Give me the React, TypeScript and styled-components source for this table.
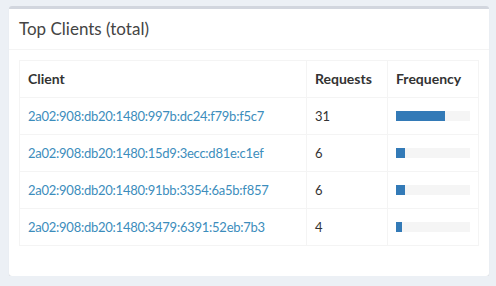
import styled, { createGlobalStyle } from "styled-components";

interface I_Client {
    Ip: string;
    Count: number;
}

const Clients: I_Client[] = [
    { Ip: "2a02:908:db20:1480:997b:dc24:f79b:f5c7", Count: 31 },
    { Ip: "2a02:908:db20:1480:15d9:3ecc:d81e:c1ef", Count: 6 },
    { Ip: "2a02:908:db20:1480:91bb:3354:6a5b:f857", Count: 6 },
    { Ip: "2a02:908:db20:1480:3479:6391:52eb:7b3", Count: 4 },
];

const Total = 47;

const GlobalStyle = createGlobalStyle`
    html, body {
        margin: 0;
        padding: 0;
        background-color: #ecf0f5;
        font-family: Lato, "Liberation Sans", sans-serif;
        color: #333;
    }
`;

const Page = styled.div`
    padding: 6px 7px 0 9px;
`;

const Box = styled.div`
    width: 480px;
    background-color: #fff;
    border-top: 3px solid #d2d6de;
    border-radius: 3px;
    box-shadow: 0 1px 1px rgba(0, 0, 0, 0.1);
`;

const BoxHeader = styled.div`
    padding: 10px;
    border-bottom: 1px solid #f4f4f4;
`;

const BoxTitle = styled.h3`
    margin: 0;
    font-size: 17px;
    line-height: 20px;
    font-weight: normal;
    color: #444;
`;

const BoxBody = styled.div`
    padding: 10px;
`;

const Table = styled.table`
    width: 100%;
    border-collapse: collapse;
    border: 1px solid #f4f4f4;
    margin-bottom: 20px;
    font-size: 14px;
    line-height: 20px;
`;

const Th = styled.th<{ $width?: number }>`
    text-align: left;
    font-weight: bold;
    padding: 8px;
    border: 1px solid #f4f4f4;
    width: ${(p) => (p.$width ? `${p.$width}px` : "auto")};
`;

const Td = styled.td`
    padding: 8px;
    border: 1px solid #f4f4f4;
    vertical-align: middle;
`;

const ClientLink = styled.a`
    color: #3c8dbc;
    text-decoration: none;
    font-size: 13px;
    letter-spacing: -0.25px;
`;

const Count = styled.span`
    font-size: 13px;
`;

const Progress = styled.div`
    height: 10px;
    width: 74px;
    background-color: #f5f5f5;
    overflow: hidden;
`;

const ProgressBar = styled.div`
    height: 100%;
    background-color: #337ab7;
`;

export default function App() {
    return (
        <>
            <GlobalStyle />
            <Page>
                <Box>
                    <BoxHeader>
                        <BoxTitle>Top Clients (total)</BoxTitle>
                    </BoxHeader>
                    <BoxBody>
                        <Table>
                            <thead>
                                <tr>
                                    <Th>Client</Th>
                                    <Th $width={64}>Requests</Th>
                                    <Th $width={74}>Frequency</Th>
                                </tr>
                            </thead>
                            <tbody>
                                {Clients.map((data) => (
                                    <tr key={data.Ip}>
                                        <Td>
                                            <ClientLink href="#">{data.Ip}</ClientLink>
                                        </Td>
                                        <Td>
                                            <Count>{data.Count}</Count>
                                        </Td>
                                        <Td>
                                            <Progress>
                                                <ProgressBar style={{ width: `${(data.Count / Total) * 100}%` }} />
                                            </Progress>
                                        </Td>
                                    </tr>
                                ))}
                            </tbody>
                        </Table>
                    </BoxBody>
                </Box>
            </Page>
        </>
    );
}
